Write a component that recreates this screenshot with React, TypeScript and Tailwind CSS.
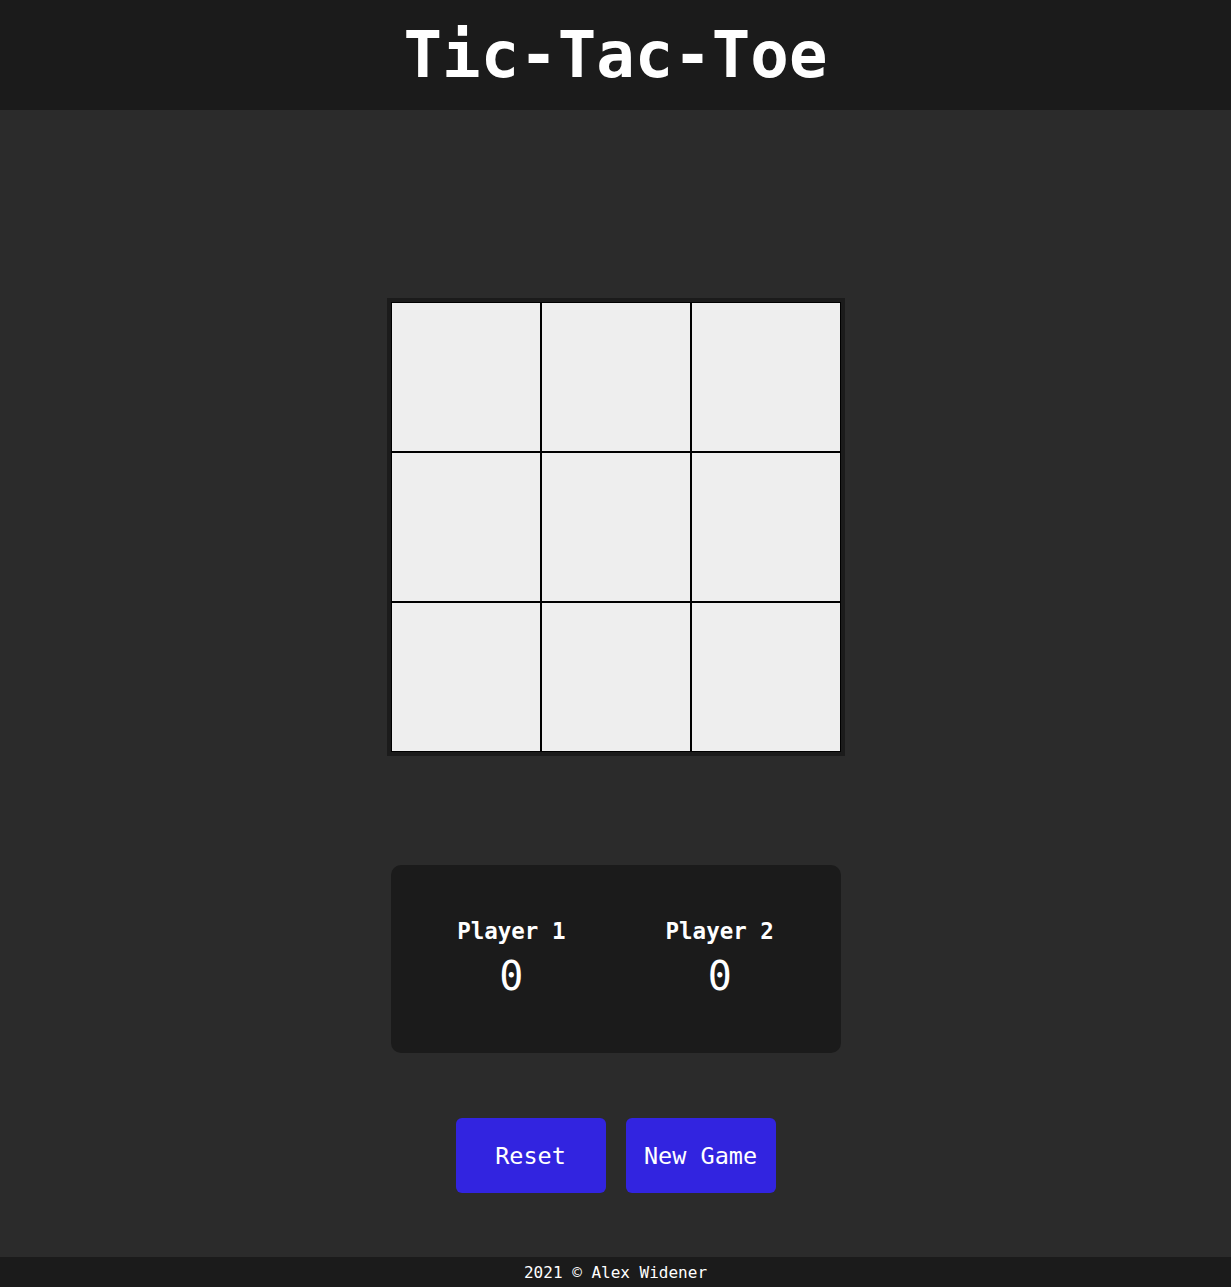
const mono = { fontFamily: '"DejaVu Sans Mono", "Liberation Mono", monospace' };

const players = [
  { name: 'Player 1', score: 0 },
  { name: 'Player 2', score: 0 },
];

export default function App() {
  const cells = Array.from({ length: 9 });

  return (
    <div className="min-h-[1287px] flex flex-col bg-[#2b2b2b] text-white" style={mono}>
      <header className="h-[110px] bg-[#1b1b1b] flex items-center justify-center">
        <h1 className="text-[64px] font-bold leading-none">Tic-Tac-Toe</h1>
      </header>

      <main className="flex-1 flex flex-col items-center">
        <div className="mt-[188px] p-1 bg-[#1b1b1b] grid grid-cols-3">
          {cells.map((_, i) => (
            <button key={i} className="w-[150px] h-[150px] bg-[#eeeeee] border border-black" />
          ))}
        </div>

        <div className="mt-[109px] w-[450px] h-[188px] rounded-[10px] bg-[#1b1b1b] flex items-center justify-center gap-[100px] pb-[2px]">
          {players.map((p) => (
            <div key={p.name} className="flex flex-col items-center">
              <span className="text-[22.5px] font-bold leading-none">{p.name}</span>
              <span className="text-[40px] leading-none mt-[14px]">{p.score}</span>
            </div>
          ))}
        </div>

        <div className="mt-[65px] flex gap-5">
          <button className="w-[150px] h-[75px] rounded-md bg-[#3224e0] text-[23.5px] text-white pt-[2px]">Reset</button>
          <button className="w-[150px] h-[75px] rounded-md bg-[#3224e0] text-[23.5px] text-white pt-[2px]">New Game</button>
        </div>
      </main>

      <footer className="h-[30px] bg-[#1b1b1b] flex items-center justify-center text-[16px] pt-[2px]">
        2021 © Alex Widener
      </footer>
    </div>
  );
}
